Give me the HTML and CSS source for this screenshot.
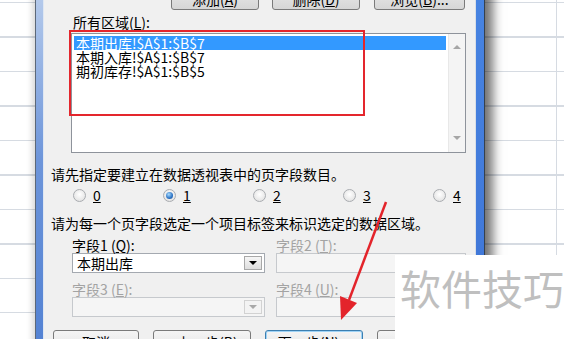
FILE: index.html
```html
<!DOCTYPE html>
<html>
<head>
<meta charset="utf-8">
<title>数据透视表和数据透视图向导</title>
<link rel="stylesheet" href="styles.css">
</head>
<body>
<div class="sheet">
  <div class="dialog">
    <div class="frame frame-left"></div>
    <div class="client">
      <div class="toolbar">
        <button type="button" class="btn btn-top">添加(<u>A</u>)</button>
        <button type="button" class="btn btn-top">删除(<u>D</u>)</button>
        <button type="button" class="btn btn-top btn-wide">浏览(<u>B</u>)...</button>
      </div>

      <div class="label indent">所有区域(<u>L</u>):</div>
      <div class="listbox">
        <ul class="items">
          <li class="selected">本期出库!$A$1:$B$7</li>
          <li>本期入库!$A$1:$B$7</li>
          <li>期初库存!$A$1:$B$5</li>
        </ul>
        <div class="vscroll">
          <span class="arrow arrow-up"></span>
          <span class="arrow arrow-down"></span>
        </div>
      </div>

      <p class="prompt prompt-count">请先指定要建立在数据透视表中的页字段数目。</p>
      <div class="radios">
        <label class="radio"><span class="dot"></span><u>0</u></label>
        <label class="radio"><span class="dot checked"></span><u>1</u></label>
        <label class="radio"><span class="dot"></span><u>2</u></label>
        <label class="radio"><span class="dot"></span><u>3</u></label>
        <label class="radio last"><span class="dot"></span><u>4</u></label>
      </div>

      <p class="prompt prompt-fields">请为每一个页字段选定一个项目标签来标识选定的数据区域。</p>
      <div class="fields">
        <div class="field">
          <div class="label">字段1 (<u>Q</u>):</div>
          <div class="combo"><span class="value">本期出库</span><span class="drop"></span></div>
        </div>
        <div class="field disabled">
          <div class="label">字段2 (<u>T</u>):</div>
          <div class="combo"><span class="value"></span><span class="drop"></span></div>
        </div>
        <div class="field disabled">
          <div class="label">字段3 (<u>E</u>):</div>
          <div class="combo"><span class="value"></span><span class="drop"></span></div>
        </div>
        <div class="field disabled">
          <div class="label">字段4 (<u>U</u>):</div>
          <div class="combo"><span class="value"></span><span class="drop"></span></div>
        </div>
      </div>

      <div class="footer">
        <button type="button" class="btn btn-cancel">取消</button>
        <button type="button" class="btn btn-step">&lt; 上一步(<u>B</u>)</button>
        <button type="button" class="btn btn-step btn-default">下一步(<u>N</u>) &gt;</button>
        <button type="button" class="btn btn-step">完成(<u>F</u>)</button>
      </div>
    </div>
    <div class="frame frame-right"></div>
  </div>

  <!-- annotations on top of the screenshot -->
  <div class="mark-box"></div>
  <svg class="mark-arrow" width="564" height="339" viewBox="0 0 564 339">
    <line x1="386" y1="202" x2="349" y2="300" stroke="#e3242b" stroke-width="2.5"/>
    <polygon points="341,320 357,303 340,296" fill="#e3242b"/>
  </svg>
  <div class="watermark">软件技巧</div>
</div>
</body>
</html>
```

FILE: styles.css
```css
* { box-sizing: border-box; }

html, body { margin: 0; }

body {
  font-family: "Noto Sans CJK SC", "Liberation Sans", sans-serif;
  font-size: 14px;
  line-height: 16px;
  color: #000;
}

/* spreadsheet behind the dialog */
.sheet {
  position: relative;
  width: 564px;
  height: 339px;
  overflow: hidden;
  background-color: #fff;
  background-image:
    linear-gradient(to right, transparent 556px, #d6dbe2 556px, #d6dbe2 557px, transparent 557px),
    repeating-linear-gradient(to bottom, #d6dbe2 0, #d6dbe2 1px, transparent 1px, transparent 34.5px);
  background-position: 0 0, 0 2px;
}

.dialog {
  display: flex;
  width: 450px;
  margin: -13px 0 0 35px;
  box-shadow: 10px 0 10px -2px rgba(0, 0, 0, 0.55), -3px 0 6px rgba(0, 0, 0, 0.15);
}

.frame { flex: none; }
.frame-left {
  width: 9px;
  border-left: 1px solid #5c6878;
  border-right: 1px solid #dfe7f2;
  background: linear-gradient(to bottom, #b9cdec, #6d95da 45%, #4f7fd2);
}
.frame-right {
  width: 10px;
  border-left: 1px solid #d9dfe6;
  border-right: 1px solid #34404e;
  background: linear-gradient(to bottom, #4784e2, #3e73d4);
}

.client {
  flex: 1;
  background: #f0f0f0;
  padding-bottom: 20px;
}

/* buttons */
.btn {
  height: 23px;
  padding: 0;
  border: 1px solid #7a7a7a;
  border-radius: 3px;
  background: linear-gradient(to bottom, #f4f4f4, #ececec 50%, #e0e0e0 50%, #d6d6d6);
  font: inherit;
  line-height: 16px;
  color: #000;
}

.toolbar {
  display: flex;
  justify-content: flex-end;
  gap: 13px;
  height: 23px;
  padding-right: 10px;
}
.btn-top { width: 88px; }
.btn-wide { width: 91px; margin-left: 1px; }

.label { height: 16px; white-space: nowrap; }
.indent { margin: 4px 0 0 29px; }

/* list of ranges */
.listbox {
  display: flex;
  width: 395px;
  height: 120px;
  margin: 3px 0 0 27px;
  border: 1px solid #8e939b;
  background: #fff;
}
.items {
  flex: 1;
  margin: 2px 2px 0 2px;
  padding: 0;
  list-style: none;
}
.items li {
  height: 14px;
  padding-left: 2px;
  line-height: 14px;
  white-space: nowrap;
}
.items .selected { background: #3399ff; color: #fff; }

.vscroll {
  display: flex;
  flex-direction: column;
  justify-content: space-between;
  align-items: center;
  width: 17px;
  padding: 11px 0 12px;
  background: #f4f4f4;
  border-left: 1px solid #e8e8e8;
}
.arrow {
  width: 0;
  height: 0;
  border-left: 4px solid transparent;
  border-right: 4px solid transparent;
}
.arrow-up { border-bottom: 4px solid #a6a6a6; }
.arrow-down { border-top: 4px solid #a6a6a6; }

.prompt { margin: 0 0 0 7px; white-space: nowrap; }
.prompt-count { margin-top: 13px; }
.prompt-fields { margin-top: 12px; }

/* page field count */
.radios {
  display: flex;
  height: 16px;
  margin: 5px 0 0 29px;
}
.radio {
  display: flex;
  align-items: center;
  gap: 7px;
  width: 90px;
}
.radio.last { width: auto; }
.dot {
  display: flex;
  align-items: center;
  justify-content: center;
  width: 13px;
  height: 13px;
  border: 1px solid #a9acb0;
  border-radius: 50%;
  background: radial-gradient(circle at 50% 40%, #ffffff, #dcdcdc);
}
.dot.checked::after {
  content: "";
  width: 7px;
  height: 7px;
  border-radius: 50%;
  background: radial-gradient(circle at 40% 35%, #a8dcff, #2c72c4 60%, #1b4f90);
}

/* field combos */
.fields {
  display: grid;
  grid-template-columns: 193px 190px;
  column-gap: 11px;
  row-gap: 8px;
  margin: 6px 0 0 28px;
}
.combo {
  display: flex;
  align-items: center;
  height: 20px;
  border: 1px solid #a4a9b0;
  background: #fff;
}
.value { flex: 1; padding-left: 4px; white-space: nowrap; }
.drop {
  display: flex;
  align-items: center;
  justify-content: center;
  width: 18px;
  height: 14px;
  margin-right: 2px;
  border: 1px solid #a8a8a8;
  background: linear-gradient(to bottom, #f6f6f6, #dedede);
}
.drop::after {
  content: "";
  border-left: 4px solid transparent;
  border-right: 4px solid transparent;
  border-top: 4px solid #000;
}
.disabled .label { color: #a3a3a3; }
.disabled .combo { border-color: #c6c9cd; background: #f5f5f5; }
.disabled .drop { border-color: #d2d2d2; background: #f3f3f3; }
.disabled .drop::after { border-top-color: #a8a8a8; }

/* wizard buttons */
.footer {
  display: flex;
  gap: 14px;
  margin: 13px 0 0 9px;
}
.btn-cancel { width: 86px; }
.btn-step { width: 98px; }
.btn-default {
  border-color: #3c7fb1;
  box-shadow: inset 0 0 0 1px #9fd3f6;
}

/* annotations */
.mark-box {
  position: absolute;
  left: 69px;
  top: 30px;
  width: 296px;
  height: 86px;
  border: 2px solid #e4262d;
}
.mark-arrow {
  position: absolute;
  left: 0;
  top: 0;
}
.watermark {
  position: absolute;
  left: 395px;
  top: 255px;
  right: 0;
  bottom: 0;
  padding: 12px 0 0 5px;
  background: #fff;
  color: #bfbfbf;
  font-size: 41px;
  line-height: 41px;
  white-space: nowrap;
}
```
